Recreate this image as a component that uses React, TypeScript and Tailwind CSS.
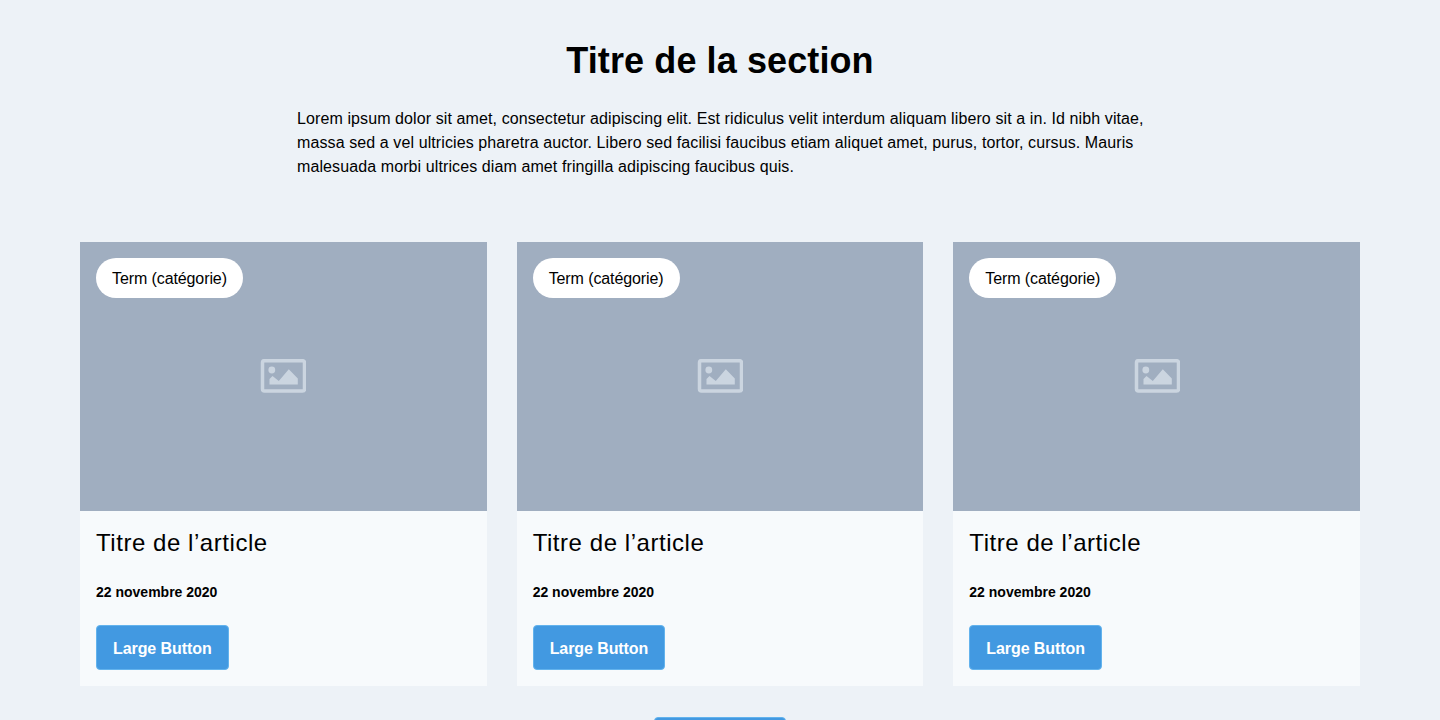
function PictureIcon() {
  return (
    <svg width="46" height="35" viewBox="0 0 46 35" fill="none" className="text-[#cbd5e0]">
      <rect x="2.5" y="1.7" width="42" height="30.3" rx="2" stroke="currentColor" strokeWidth="3.5" />
      <circle cx="11.8" cy="11" r="3.4" fill="currentColor" />
      <path d="M9.5 25.5v-5.5l3-3 6.3 5 10-11.7 9 9.2v6z" fill="currentColor" />
    </svg>
  )
}

function Card() {
  return (
    <article className="flex flex-col bg-[#f7fafc]">
      <div className="relative flex h-[269px] items-center justify-center bg-[#a0aec0]">
        <span className="absolute left-4 top-4 flex h-10 items-center rounded-full bg-white px-4 pt-0.5 text-base tracking-[-0.1px] text-black">
          Term (catégorie)
        </span>
        <PictureIcon />
      </div>
      <div className="flex h-[175px] flex-col items-start px-4">
        <h3 className="mt-[16px] text-2xl leading-8 tracking-[0.55px] text-black">Titre de l’article</h3>
        <p className="mt-[23px] text-sm font-bold leading-5 text-black">22 novembre 2020</p>
        <a className="mt-[23px] flex h-[45px] items-center rounded border border-[#63b3ed] bg-[#4299e1] px-4 pt-0.5 text-base font-bold tracking-[-0.08px] text-white">
          Large Button
        </a>
      </div>
    </article>
  )
}

export default function App() {
  return (
    <main className="flex h-[720px] flex-col items-center overflow-hidden bg-[#edf2f7] px-20 font-['Liberation_Sans',Arial,sans-serif]">
      <h2 className="mt-[38px] text-4xl font-bold leading-[46px] tracking-[0.1px] text-black">Titre de la section</h2>
      <p className="ml-[14px] mt-[23px] w-[860px] text-base leading-6 tracking-[0.1px] text-black">
        Lorem ipsum dolor sit amet, consectetur adipiscing elit. Est ridiculus velit interdum aliquam libero sit a in. Id nibh vitae, massa sed a vel ultricies pharetra auctor. Libero sed facilisi faucibus etiam aliquet amet, purus, tortor, cursus. Mauris malesuada morbi ultrices diam amet fringilla adipiscing faucibus quis.
      </p>
      <section className="mt-[63px] grid w-full grid-cols-3 gap-[30px]">
        <Card />
        <Card />
        <Card />
      </section>
      <a className="mt-[31px] flex h-[45px] w-[132px] shrink-0 items-center justify-center rounded border border-[#63b3ed] bg-[#4299e1] text-base font-bold text-white">
        Large Button
      </a>
    </main>
  )
}
